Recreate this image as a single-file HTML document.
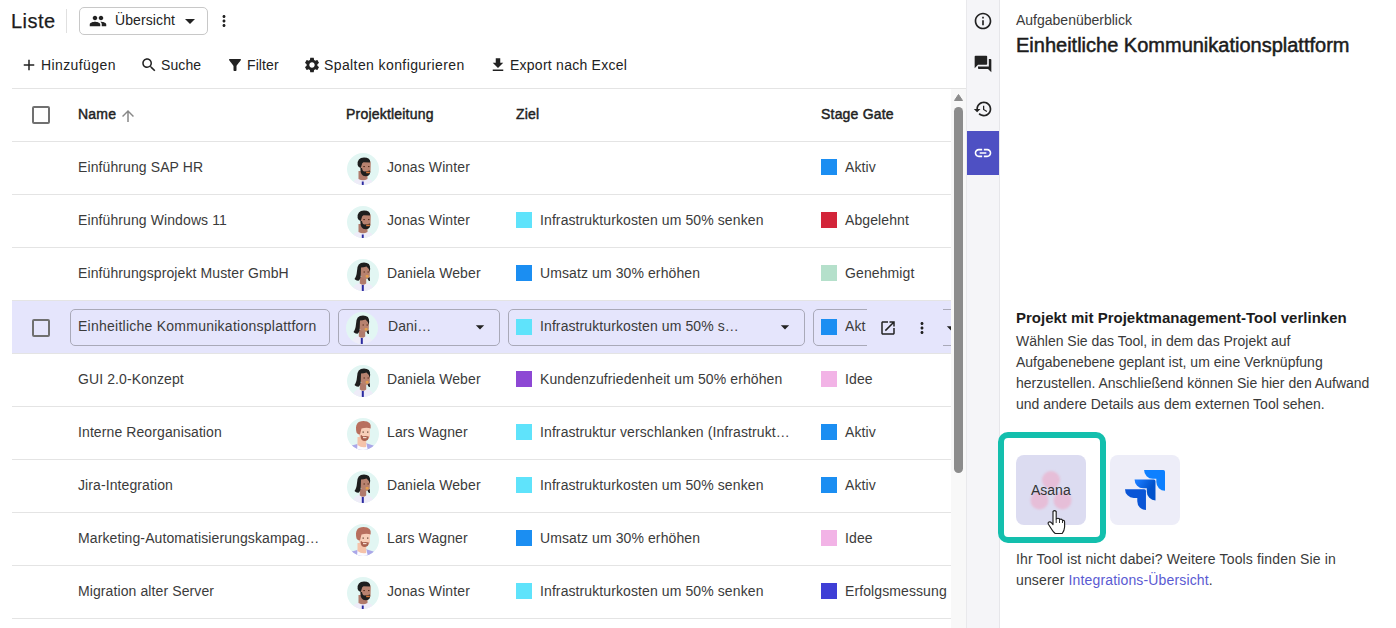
<!DOCTYPE html>
<html><head><meta charset="utf-8">
<style>
*{box-sizing:border-box;margin:0;padding:0}
html,body{width:1396px;height:628px;overflow:hidden;background:#fff}
body{position:relative;font-family:"Liberation Sans",sans-serif;color:#333;font-size:14px}
.a{position:absolute;white-space:nowrap}
svg{display:block}
.t{font-size:14px;line-height:16px;color:#3b3b3b;letter-spacing:0.1px}
.hl{position:absolute;left:12px;width:939px;height:1px;background:#e4e4e4}
.sq{position:absolute;width:16px;height:16px}
.av{position:absolute;width:32px;height:32px}
.hd{font-size:14px;line-height:16px;color:#222;font-weight:400;-webkit-text-stroke:0.45px #222;letter-spacing:0.2px}
.cb{position:absolute;width:18px;height:18px;border:2px solid #707070;border-radius:2px}
.inp{position:absolute;top:309px;height:37px;border:1px solid #a9a9b8;border-radius:5px}
</style></head><body>

<svg width="0" height="0" style="position:absolute">
<defs>
<clipPath id="cc"><circle cx="16" cy="16" r="16"/></clipPath>
<symbol id="avJ" viewBox="0 0 32 32">
<circle cx="16" cy="16" r="16" fill="#e2f6f3"/>
<g clip-path="url(#cc)">
<path d="M5 33 Q6 26.5 12 25.5 L20 25.5 Q26 26.5 27 33Z" fill="#eeecf8"/>
<path d="M11.5 18 L20.5 18 L20.5 26 Q16 28.5 11.5 26Z" fill="#b07a6b"/>
<path d="M13.5 10 Q13.5 6 18.5 6 Q23.8 6 23.8 10.5 L23.5 19 Q21.5 23 17.5 23 Q14 21.5 13.5 17Z" fill="#b8826f"/>
<path d="M10.6 12 Q10 4.5 17 4.5 Q23.5 4.5 23.2 9.5 L16.5 9.2 Q15 9.5 14.5 12.5 L13.8 15 Q11.5 15 10.6 12Z" fill="#1e1e1e"/>
<path d="M13.5 15 Q13 23.2 18.5 23.2 Q23 23 23.2 19.5 L23 17.5 Q20 18.3 17.5 18.5 Q15.5 18.5 15 15Z" fill="#1e1e1e"/>
<rect x="19.2" y="18.6" width="3.6" height="1.6" fill="#d8773a"/>
<rect x="16.3" y="13" width="1.6" height="1.1" fill="#5a3020"/><rect x="21" y="13" width="1.5" height="1.1" fill="#5a3020"/>
<rect x="14.8" y="28.5" width="1.9" height="4" fill="#2b2aa0"/>
</g>
</symbol>
<symbol id="avD" viewBox="0 0 32 32">
<circle cx="16" cy="16" r="16" fill="#e2f6f3"/>
<g clip-path="url(#cc)">
<path d="M5 33 Q6 25.5 12 24 L20 24 Q26.5 25.5 27.5 33Z" fill="#eeecf8"/>
<path d="M12.8 18 L19.2 18 L19.2 24.5 Q16 27 12.8 24.5Z" fill="#b07a6b"/>
<path d="M13 9 Q13 6 18 6 Q23 6 23 10 L22.8 17.5 Q21 20.5 18 20 Q14 19 13 15Z" fill="#b8826f"/>
<path d="M7.5 20 Q9.5 17.5 10 12 Q10 3.6 17 3.6 Q23.5 3.6 23.2 10 L22.5 13 Q22 9 19.5 7.5 Q16.5 8.5 14 8.5 L13.8 14 Q14 20.5 11.5 21.8 Q9 22 7.5 20Z" fill="#1e1e1e"/>
<path d="M20.5 19.5 Q21.5 22.5 23 22 L22.8 18Z" fill="#1e1e1e"/>
<rect x="18.6" y="16" width="3" height="2.4" rx="1" fill="#e6a04a"/>
<rect x="16.5" y="12.5" width="1.5" height="1" fill="#5a3020"/><rect x="20.5" y="12.5" width="1.5" height="1" fill="#5a3020"/>
<rect x="14.8" y="26" width="2" height="6.5" fill="#2b2aa0"/>
</g>
</symbol>
<symbol id="avL" viewBox="0 0 32 32">
<circle cx="16" cy="16" r="16" fill="#e2f6f3"/>
<g clip-path="url(#cc)">
<path d="M4 33 L5 27.5 L12 25.5 L20 25.5 L26.5 27.5 L27.5 33Z" fill="#aba7e8"/>
<path d="M10 33 L10.5 26 L19.5 26 L21 33Z" fill="#fbfbff"/>
<path d="M10.5 19 L19.2 19 L19.2 29 Q14 30 10.5 27Z" fill="#f5c3aa"/>
<path d="M11.5 11 Q11.5 7 17.5 7 Q23 7 23 11 L23 18.5 Q21.5 22 17.5 22 Q12.5 21 11.5 16Z" fill="#f8cfb9"/>
<path d="M9.5 14.5 Q7 3 16.5 3 Q25 3 23.7 10.5 Q21 9.5 17 10 L14.5 10.5 L13 16.5 Q10.5 16.5 9.5 14.5Z" fill="#b86f5e"/>
<path d="M13.5 17.5 Q13.5 23 18 23 Q21.8 22.5 21.8 18.5 Q19 17.8 16.5 18.3 Q15 18.3 14.5 17Z" fill="#a9614f"/>
<rect x="16" y="19" width="3.5" height="1.2" fill="#f2dccf"/>
<rect x="15.5" y="13.5" width="1.4" height="1.2" fill="#6a4a3a"/><rect x="20" y="13.5" width="1.4" height="1.2" fill="#6a4a3a"/>
</g>
</symbol>
<clipPath id="dot"><rect x="0" y="0" width="1" height="1"/></clipPath>
</defs></svg>

<!-- top bar -->
<div class="a" style="left:11px;top:9px;font-size:20px;line-height:24px;color:#1c1c1c;letter-spacing:0.5px;-webkit-text-stroke:0.25px #1c1c1c">Liste</div>
<div class="a" style="left:66px;top:9px;width:1px;height:24px;background:#e0e0e0"></div>
<div class="a" style="left:79px;top:7px;width:129px;height:28px;border:1px solid #c8c8c8;border-radius:5px"></div>
<svg class="a" style="left:89px;top:12px" width="18" height="18" viewBox="0 0 24 24"><path fill="#222" d="M16 11c1.66 0 2.99-1.34 2.99-3S17.66 5 16 5c-1.66 0-3 1.34-3 3s1.34 3 3 3zm-8 0c1.66 0 2.99-1.34 2.99-3S9.66 5 8 5C6.34 5 5 6.34 5 8s1.34 3 3 3zm0 2c-2.33 0-7 1.17-7 3.5V19h14v-2.5c0-2.330-4.67-3.5-7-3.5zm8 0c-.29 0-.62.02-.97.05 1.16.84 1.970 1.97 1.97 3.45V19h6v-2.5c0-2.33-4.67-3.5-7-3.5z"/></svg>
<div class="a t" style="left:115px;top:12px;color:#222">Übersicht</div>
<svg class="a" style="left:178px;top:9px" width="24" height="24" viewBox="0 0 24 24"><path fill="#222" d="M7 10l5 5 5-5z"/></svg>
<svg class="a" style="left:215px;top:12px" width="18" height="18" viewBox="0 0 24 24"><path fill="#222" d="M12 8c1.1 0 2-.9 2-2s-.9-2-2-2-2 .9-2 2 .9 2 2 2zm0 2c-1.1 0-2 .9-2 2s.9 2 2 2 2-.9 2-2-.9-2-2-2zm0 6c-1.1 0-2 .9-2 2s.9 2 2 2 2-.9 2-2-.9-2-2-2z"/></svg>

<!-- toolbar -->
<svg class="a" style="left:20px;top:56px" width="18" height="18" viewBox="0 0 24 24"><path fill="#222" d="M19 13h-6v6h-2v-6H5v-2h6V5h2v6h6v2z"/></svg>
<div class="a t" style="left:41px;top:57px;color:#222"><span style="letter-spacing:0.4px">Hinzufügen</span></div>
<svg class="a" style="left:140px;top:56px" width="18" height="18" viewBox="0 0 24 24"><path fill="#222" d="M15.5 14h-.79l-.28-.27C15.41 12.590 16 11.11 16 9.5 16 5.91 13.09 3 9.5 3S3 5.91 3 9.5 5.91 16 9.5 16c1.61 0 3.09-.59 4.230-1.57l.27.28v.79l5 4.99L20.49 19l-4.99-5zm-6 0C7.01 14 5 11.99 5 9.5S7.01 5 9.5 5 14 7.01 14 9.5 11.99 14 9.5 14z"/></svg>
<div class="a t" style="left:161px;top:57px;color:#222">Suche</div>
<svg class="a" style="left:226px;top:56px" width="18" height="18" viewBox="0 0 24 24"><path fill="#222" d="M4.25 5.61C6.27 8.2 10 13 10 13v6c0 .55.45 1 1 1h2c.55 0 1-.45 1-1v-6s3.72-4.8 5.74-7.39c.51-.66.04-1.61-.79-1.61H5.04c-.83 0-1.3.95-.79 1.61z"/></svg>
<div class="a t" style="left:247px;top:57px;color:#222">Filter</div>
<svg class="a" style="left:303px;top:56px" width="18" height="18" viewBox="0 0 24 24"><path fill="#222" d="M19.14 12.94c.04-.3.06-.61.06-.94 0-.32-.02-.64-.07-.94l2.03-1.58c.18-.14.23-.41.12-.61l-1.92-3.32c-.12-.22-.37-.29-.59-.22l-2.39.96c-.5-.38-1.03-.7-1.62-.94l-.36-2.54c-.04-.24-.24-.41-.48-.41h-3.84c-.24 0-.43.17-.47.41l-.36 2.540c-.59.24-1.13.57-1.62.94l-2.39-.96c-.22-.08-.47 0-.59.22L2.74 8.87c-.12.21-.08.47.12.61l2.03 1.58c-.05.3-.09.63-.09.94s.02.64.07.94l-2.03 1.58c-.18.14-.23.41-.12.61l1.92 3.32c.12.22.37.29.59.22l2.39-.96c.5.38 1.03.7 1.62.94l.36 2.54c.05.24.24.41.48.41h3.84c.24 0 .44-.17.47-.41l.36-2.54c.59-.24 1.13-.56 1.62-.94l2.39.96c.22.08.47 0 .59-.22l1.92-3.32c.12-.22.07-.47-.12-.61l-2.01-1.58zM12 15.6c-1.98 0-3.6-1.62-3.6-3.6s1.62-3.6 3.6-3.6 3.6 1.62 3.6 3.6-1.62 3.6-3.6 3.6z"/></svg>
<div class="a t" style="left:324px;top:57px;color:#222"><span style="letter-spacing:0.4px">Spalten konfigurieren</span></div>
<svg class="a" style="left:489px;top:56px" width="18" height="18" viewBox="0 0 24 24"><path fill="#222" d="M19 9h-4V3H9v6H5l7 7 7-7zM5 18v2h14v-2H5z"/></svg>
<div class="a t" style="left:510px;top:57px;color:#222"><span style="letter-spacing:0.25px">Export nach Excel</span></div>

<!-- table lines -->
<div class="hl" style="top:88px;width:954px"></div>
<div class="hl" style="top:141px"></div>
<div class="hl" style="top:194px"></div>
<div class="hl" style="top:247px"></div>
<div class="hl" style="top:300px"></div>
<div class="hl" style="top:353px"></div>
<div class="hl" style="top:406px"></div>
<div class="hl" style="top:459px"></div>
<div class="hl" style="top:512px"></div>
<div class="hl" style="top:565px"></div>
<div class="hl" style="top:618px"></div>

<!-- header -->
<div class="cb" style="left:32px;top:106px"></div>
<div class="a hd" style="left:78px;top:106px">Name</div>
<svg class="a" style="left:119px;top:107px" width="18" height="18" viewBox="0 0 24 24"><path fill="#888" d="M4 12l1.41 1.41L11 7.830V20h2V7.83l5.58 5.59L20 12l-8-8-8 8z"/></svg>
<div class="a hd" style="left:346px;top:106px">Projektleitung</div>
<div class="a hd" style="left:516px;top:106px">Ziel</div>
<div class="a hd" style="left:821px;top:106px">Stage Gate</div>

<!-- rows -->
<div class="a t" style="left:78px;top:159px">Einführung SAP HR</div>
<svg class="av" style="left:347px;top:153px"><use href="#avJ"/></svg>
<div class="a t" style="left:387px;top:159px">Jonas Winter</div>
<div class="sq" style="left:821px;top:159px;background:#1b8ef2"></div>
<div class="a t" style="left:845px;top:159px">Aktiv</div>
<div class="a t" style="left:78px;top:212px">Einführung Windows 11</div>
<svg class="av" style="left:347px;top:206px"><use href="#avJ"/></svg>
<div class="a t" style="left:387px;top:212px">Jonas Winter</div>
<div class="sq" style="left:516px;top:212px;background:#5fe3fb"></div>
<div class="a t" style="left:540px;top:212px">Infrastrukturkosten um 50% senken</div>
<div class="sq" style="left:821px;top:212px;background:#d3253a"></div>
<div class="a t" style="left:845px;top:212px">Abgelehnt</div>
<div class="a t" style="left:78px;top:265px">Einführungsprojekt Muster GmbH</div>
<svg class="av" style="left:347px;top:259px"><use href="#avD"/></svg>
<div class="a t" style="left:387px;top:265px">Daniela Weber</div>
<div class="sq" style="left:516px;top:265px;background:#1b8ef2"></div>
<div class="a t" style="left:540px;top:265px">Umsatz um 30% erhöhen</div>
<div class="sq" style="left:821px;top:265px;background:#b5e0cb"></div>
<div class="a t" style="left:845px;top:265px">Genehmigt</div>
<div class="a t" style="left:78px;top:371px">GUI 2.0-Konzept</div>
<svg class="av" style="left:347px;top:365px"><use href="#avD"/></svg>
<div class="a t" style="left:387px;top:371px">Daniela Weber</div>
<div class="sq" style="left:516px;top:371px;background:#8d48d4"></div>
<div class="a t" style="left:540px;top:371px">Kundenzufriedenheit um 50% erhöhen</div>
<div class="sq" style="left:821px;top:371px;background:#f2b3e6"></div>
<div class="a t" style="left:845px;top:371px">Idee</div>
<div class="a t" style="left:78px;top:424px">Interne Reorganisation</div>
<svg class="av" style="left:347px;top:418px"><use href="#avL"/></svg>
<div class="a t" style="left:387px;top:424px">Lars Wagner</div>
<div class="sq" style="left:516px;top:424px;background:#5fe3fb"></div>
<div class="a t" style="left:540px;top:424px">Infrastruktur verschlanken (Infrastrukt…</div>
<div class="sq" style="left:821px;top:424px;background:#1b8ef2"></div>
<div class="a t" style="left:845px;top:424px">Aktiv</div>
<div class="a t" style="left:78px;top:477px">Jira-Integration</div>
<svg class="av" style="left:347px;top:471px"><use href="#avD"/></svg>
<div class="a t" style="left:387px;top:477px">Daniela Weber</div>
<div class="sq" style="left:516px;top:477px;background:#5fe3fb"></div>
<div class="a t" style="left:540px;top:477px">Infrastrukturkosten um 50% senken</div>
<div class="sq" style="left:821px;top:477px;background:#1b8ef2"></div>
<div class="a t" style="left:845px;top:477px">Aktiv</div>
<div class="a t" style="left:78px;top:530px">Marketing-Automatisierungskampag…</div>
<svg class="av" style="left:347px;top:524px"><use href="#avL"/></svg>
<div class="a t" style="left:387px;top:530px">Lars Wagner</div>
<div class="sq" style="left:516px;top:530px;background:#1b8ef2"></div>
<div class="a t" style="left:540px;top:530px">Umsatz um 30% erhöhen</div>
<div class="sq" style="left:821px;top:530px;background:#f2b3e6"></div>
<div class="a t" style="left:845px;top:530px">Idee</div>
<div class="a t" style="left:78px;top:583px">Migration alter Server</div>
<svg class="av" style="left:347px;top:577px"><use href="#avJ"/></svg>
<div class="a t" style="left:387px;top:583px">Jonas Winter</div>
<div class="sq" style="left:516px;top:583px;background:#5fe3fb"></div>
<div class="a t" style="left:540px;top:583px">Infrastrukturkosten um 50% senken</div>
<div class="sq" style="left:821px;top:583px;background:#3f3fd6"></div>
<div class="a t" style="left:845px;top:583px">Erfolgsmessung</div>

<!-- selected row -->
<div class="a" style="left:12px;top:301px;width:939px;height:52px;background:#e5e5fc"></div>
<div class="cb" style="left:32px;top:319px"></div>
<div class="inp" style="left:70px;width:260px"></div>
<div class="a t" style="left:78px;top:318px;letter-spacing:0.25px">Einheitliche Kommunikationsplattforn</div>
<div class="inp" style="left:338px;width:162px"></div>
<svg class="av" style="left:346px;top:312px"><use href="#avD"/></svg>
<div class="a t" style="left:388px;top:318px">Dani…</div>
<svg class="a" style="left:470px;top:317px" width="20" height="20" viewBox="0 0 24 24"><path fill="#222" d="M7 10l5 5 5-5z"/></svg>
<div class="inp" style="left:508px;width:297px"></div>
<div class="sq" style="left:516px;top:319px;background:#5fe3fb"></div>
<div class="a t" style="left:540px;top:318px">Infrastrukturkosten um 50% s…</div>
<svg class="a" style="left:775px;top:317px" width="20" height="20" viewBox="0 0 24 24"><path fill="#222" d="M7 10l5 5 5-5z"/></svg>
<div class="inp" style="left:813px;width:160px"></div>
<div class="sq" style="left:821px;top:319px;background:#1b8ef2"></div>
<div class="a t" style="left:845px;top:318px;width:21px;overflow:hidden">Aktiv</div>
<div class="a" style="left:867px;top:309px;width:76px;height:38px;background:#e5e5fc"></div>
<svg class="a" style="left:879px;top:319px" width="18" height="18" viewBox="0 0 24 24"><path fill="#222" d="M19 19H5V5h7V3H5c-1.11 0-2 .9-2 2v14c0 1.1.89 2 2 2h14c1.1 0 2-.9 2-2v-7h-2v7zM14 3v2h3.59l-9.83 9.83 1.41 1.41L19 6.41V10h2V3h-7z"/></svg>
<svg class="a" style="left:913px;top:319px" width="18" height="18" viewBox="0 0 24 24"><path fill="#222" d="M12 8c1.1 0 2-.9 2-2s-.9-2-2-2-2 .9-2 2 .9 2 2 2zm0 2c-1.1 0-2 .9-2 2s.9 2 2 2 2-.9 2-2-.9-2-2-2zm0 6c-1.1 0-2 .9-2 2s.9 2 2 2 2-.9 2-2-.9-2-2-2z"/></svg>
<svg class="a" style="left:941px;top:318px" width="20" height="20" viewBox="0 0 24 24"><path fill="#222" d="M7 10l5 5 5-5z"/></svg>

<!-- scrollbar -->
<div class="a" style="left:951px;top:89px;width:15px;height:539px;background:#f8f8f8"></div>
<svg class="a" style="left:951px;top:88px" width="15" height="15"><path d="M3.5 12.5 L11.5 12.5 L7.5 6.5Z" fill="#8c8c8c" stroke="#8c8c8c" stroke-width="1" stroke-linejoin="round"/></svg>
<div class="a" style="left:954px;top:107px;width:9px;height:366px;background:#8c8c8c;border-radius:5px"></div>

<!-- sidebar -->
<div class="a" style="left:966px;top:0;width:34px;height:628px;background:#f5f5f8;border-left:1px solid #e9e9ec;border-right:1px solid #e6e6ea"></div>
<svg class="a" style="left:973px;top:11px" width="20" height="20" viewBox="0 0 24 24"><path fill="#222" d="M11 7h2v2h-2zm0 4h2v6h-2zm1-9C6.48 2 2 6.48 2 12s4.48 10 10 10 10-4.48 10-10S17.52 2 12 2zm0 18c-4.41 0-8-3.59-8-8s3.59-8 8-8 8 3.59 8 8-3.59 8-8 8z"/></svg>
<svg class="a" style="left:973px;top:54px" width="20" height="20" viewBox="0 0 24 24"><path fill="#222" d="M21 6h-2v9H6v2c0 .55.45 1 1 1h11l4 4V7c0-.55-.45-1-1-1zm-4 6V3c0-.55-.45-1-1-1H3c-.55 0-1 .45-1 1v14l4-4h10c.55 0 1-.45 1-1z"/></svg>
<svg class="a" style="left:973px;top:99px" width="20" height="20" viewBox="0 0 24 24"><path fill="#222" d="M13 3c-4.97 0-9 4.03-9 9H1l3.89 3.89.07.14L9 12H6c0-3.87 3.13-7 7-7s7 3.13 7 7-3.13 7-7 7c-1.93 0-3.68-.79-4.94-2.06l-1.42 1.42C8.27 19.99 10.51 21 13 21c4.97 0 9-4.03 9-9s-4.03-9-9-9zm-1 5v5l4.28 2.54.72-1.21-3.5-2.08V8H12z"/></svg>
<div class="a" style="left:967px;top:131px;width:32px;height:44px;background:#4e50c3"></div>
<svg class="a" style="left:973px;top:143px" width="20" height="20" viewBox="0 0 24 24"><path fill="#fff" d="M3.9 12c0-1.71 1.39-3.1 3.1-3.1h4V7H7c-2.76 0-5 2.240-5 5s2.24 5 5 5h4v-1.9H7c-1.71 0-3.1-1.39-3.1-3.1zM8 13h8v-2H8v2zm9-6h-4v1.9h4c1.71 0 3.1 1.39 3.1 3.1s-1.39 3.1-3.1 3.1h-4V17h4c2.76 0 5-2.24 5-5s-2.24-5-5-5z"/></svg>

<!-- right panel -->
<div class="a" style="left:1016px;top:12px;font-size:14px;line-height:16px;color:#3a3a3a">Aufgabenüberblick</div>
<div class="a" style="left:1016px;top:34px;font-size:20px;line-height:22px;color:#1c1c1c;-webkit-text-stroke:0.5px #1c1c1c">Einheitliche Kommunikationsplattform</div>
<div class="a" style="left:1016px;top:309px;font-size:15px;line-height:18px;color:#1c1c1c;font-weight:700">Projekt mit Projektmanagement-Tool verlinken</div>
<div class="a" style="left:1016px;top:331px;font-size:14px;line-height:21px;color:#3a3a3a;white-space:normal;width:370px">Wählen Sie das Tool, in dem das Projekt auf<br>Aufgabenebene geplant ist, um eine Verknüpfung<br>herzustellen. Anschließend können Sie hier den Aufwand<br>und andere Details aus dem externen Tool sehen.</div>

<div class="a" style="left:998px;top:432px;width:108px;height:111px;border:6px solid #13bfad;border-radius:10px"></div>
<div class="a" style="left:1016px;top:455px;width:70px;height:70px;background:#dcdcf1;border-radius:8px;overflow:hidden">
<svg width="70" height="70" style="position:absolute;left:0;top:0"><defs><filter id="bl"><feGaussianBlur stdDeviation="1.2"/></filter></defs><g filter="url(#bl)" fill="#eab4cf" opacity="0.75"><circle cx="35" cy="25" r="9"/><circle cx="23.5" cy="45.5" r="9"/><circle cx="46.5" cy="45.5" r="9"/></g></svg>
<div class="a" style="left:15px;top:27px;font-size:14px;line-height:16px;color:#333">Asana</div>
</div>
<div class="a" style="left:1110px;top:455px;width:70px;height:70px;background:#ededf8;border-radius:8px"></div>
<svg class="a" style="left:1125px;top:470px" width="40" height="40" viewBox="0 0 24 24"><defs>
<linearGradient id="jg1" x1="0.1" y1="0.05" x2="0.75" y2="0.45"><stop offset="0" stop-color="#1a7cff"/><stop offset="1" stop-color="#0052CC"/></linearGradient>
</defs>
<path fill="#0d80ff" d="M23.013 0H11.455a5.215 5.215 0 0 0 5.215 5.215h2.129v2.057A5.215 5.215 0 0 0 24 12.483V1.005A1.001 1.001 0 0 0 23.013 0Z"/>
<path fill="url(#jg1)" d="M17.294 5.757H5.736a5.215 5.215 0 0 0 5.215 5.214h2.129v2.058a5.218 5.218 0 0 0 5.215 5.214V6.758a1.001 1.001 0 0 0-1.001-1.001z"/>
<path fill="#0a55d6" d="M11.571 11.513H0a5.218 5.218 0 0 0 5.232 5.215h2.13v2.057A5.215 5.215 0 0 0 12.575 24V12.518a1.005 1.005 0 0 0-1.005-1.005z"/>
</svg>
<svg class="a" style="left:1047px;top:509px" width="19" height="26" viewBox="0 0 19 26"><path d="M6 2.5 Q7.5 0.8 9.2 2.5 L9.2 10 Q10.8 8.6 12.4 9.8 L12.6 10.6 Q14.2 9.6 15.4 11 L15.6 11.6 Q17.2 11 17.6 12.8 L17.6 18 Q17.4 21.5 15.2 24.5 L8.2 24.5 Q6.2 23 4.8 20.5 L1.4 15.2 Q0.6 13.6 2 13 Q3.4 12.6 4.8 14.2 L6 15.6 Z" fill="#fff" stroke="#1e1e1e" stroke-width="1.15" stroke-linejoin="round"/><path d="M9.2 10 V14 M12.5 10.5 V14 M15.5 11.3 V14" stroke="#1e1e1e" stroke-width="0.9" fill="none"/></svg>

<div class="a" style="left:1016px;top:549px;font-size:14px;line-height:21px;letter-spacing:0.15px;color:#3a3a3a;white-space:normal;width:370px">Ihr Tool ist nicht dabei? Weitere Tools finden Sie in<br>unserer <span style="color:#5a5ad2">Integrations-Übersicht</span>.</div>

</body></html>
